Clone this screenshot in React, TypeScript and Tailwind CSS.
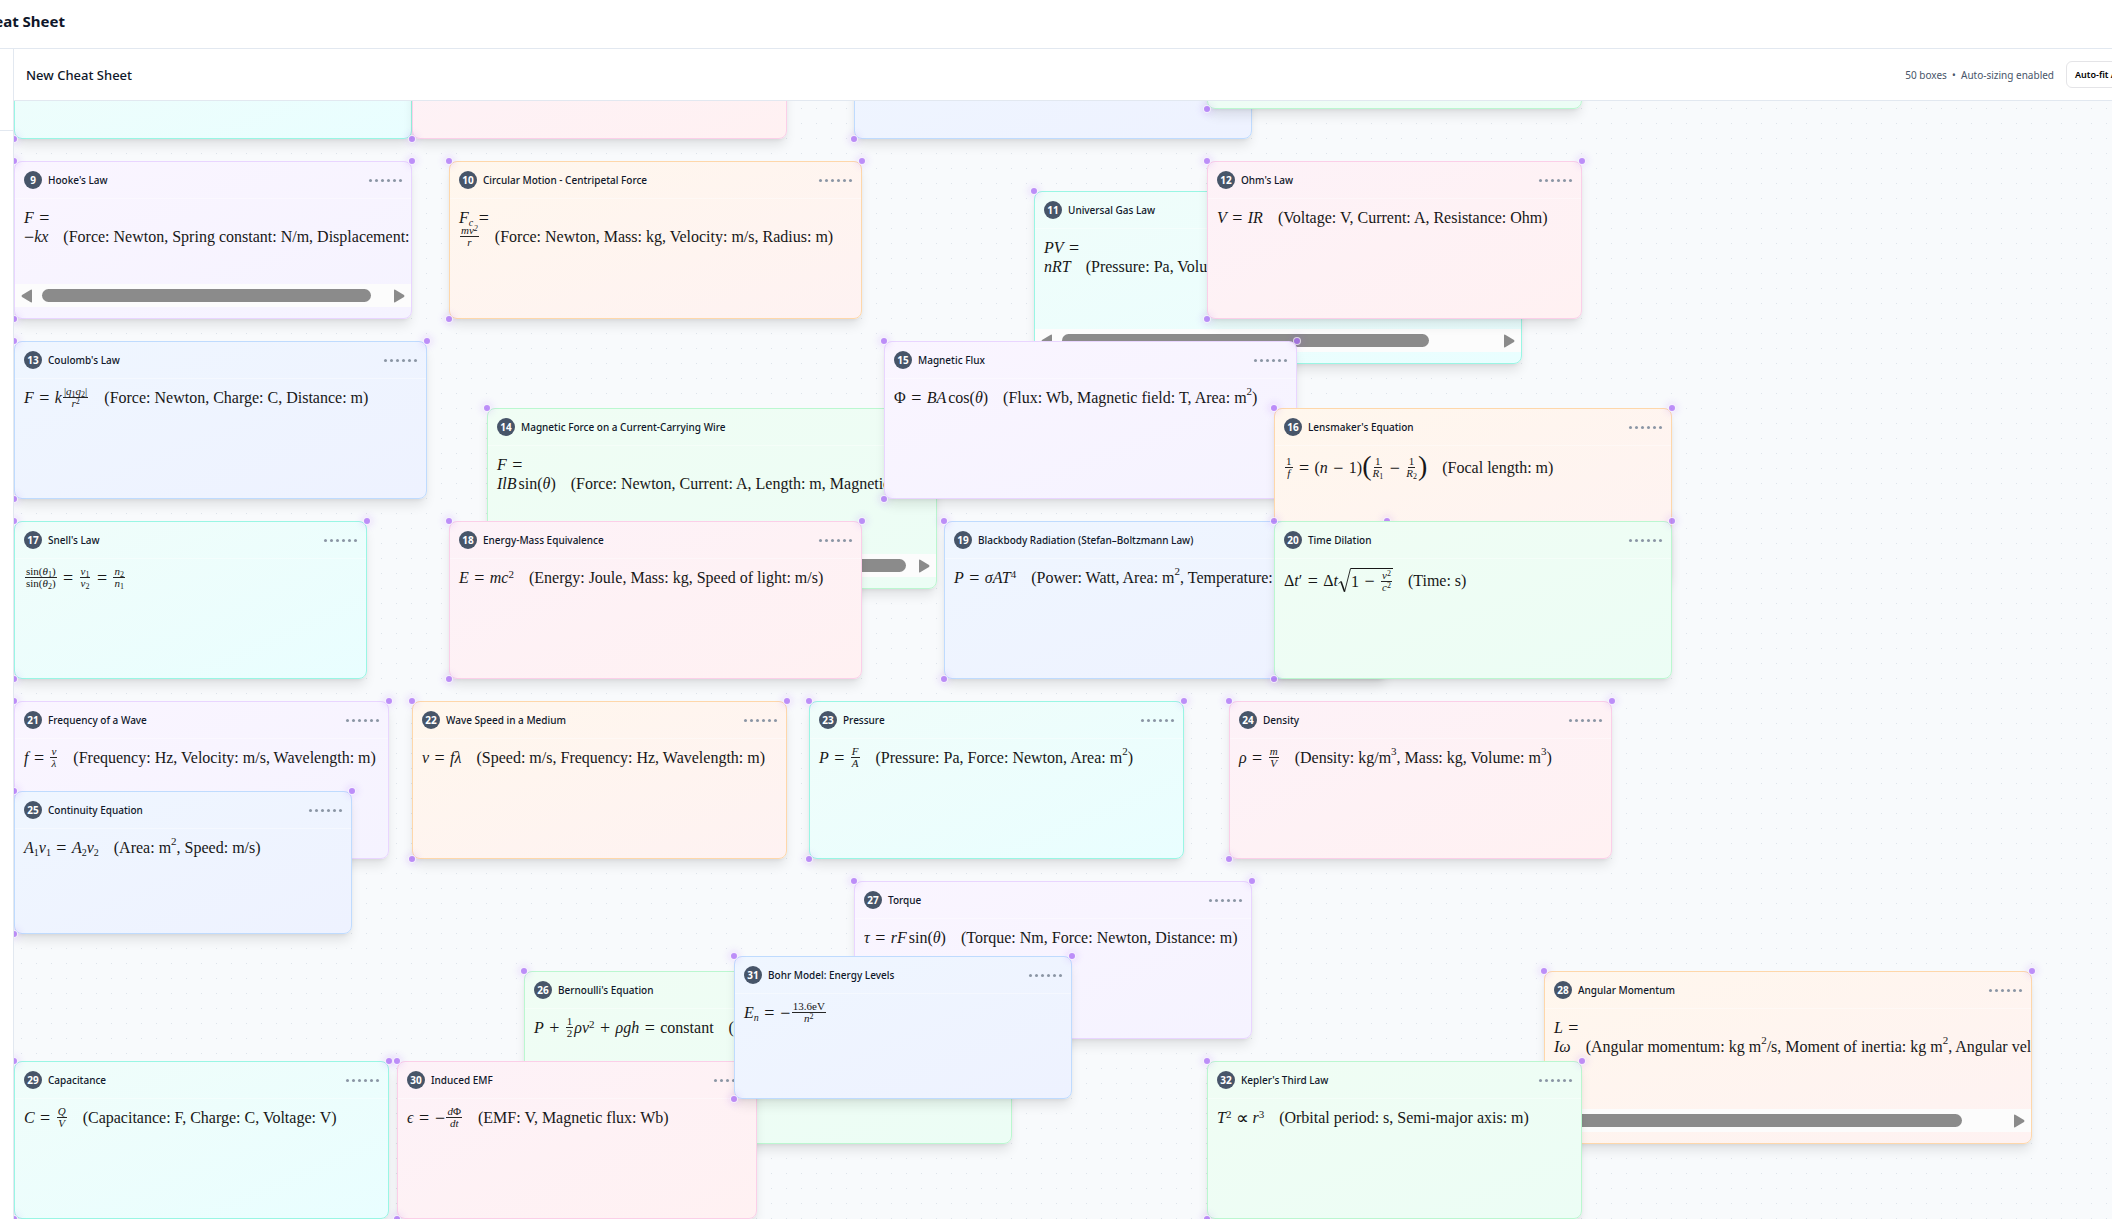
import type { ReactNode } from "react";

const themes = {
  teal: "border-[#99f6e4] from-[#f0fdfa] to-[#e9feff]",
  pink: "border-[#fbcfe8] from-[#fdf2f8] to-[#fff1f2]",
  purple: "border-[#e9d5ff] from-[#faf5ff] to-[#f5f3ff]",
  orange: "border-[#fed7aa] from-[#fff7ed] to-[#fef2f2]",
  blue: "border-[#bfdbfe] from-[#eff6ff] to-[#eef2ff]",
  green: "border-[#bbf7d0] from-[#f0fdf4] to-[#ecfdf5]",
};

type Box = {
  id: number;
  title: string;
  theme: keyof typeof themes;
  x: number;
  y: number;
  w: number;
  h: number;
  body?: ReactNode;
  thumb?: number;
};

/* ---------- formula building blocks ---------- */

const V = ({ children }: { children: ReactNode }) => <i>{children}</i>;

const Op = ({ children = "=" }: { children?: ReactNode }) => (
  <span className="mx-[5px] inline-block w-[11px] text-center text-[18px] leading-none">{children}</span>
);

const Minus = () => <span className="inline-block w-[11px] text-center text-[18px] leading-none">−</span>;

const Frac = ({ top, bottom }: { top: ReactNode; bottom: ReactNode }) => (
  <span className="mx-px inline-flex flex-col items-center text-[11px] leading-[11px] [&_sub]:text-[8px]! [&_sup]:-top-[3px] [&_sup]:text-[8px]!">
    <span className="border-b border-neutral-800 px-px">{top}</span>
    <span>{bottom}</span>
  </span>
);

const Line = ({ tall = false, children }: { tall?: boolean; children: ReactNode }) => (
  <div className={`flex items-center [&_sub]:text-[10px] [&_sup]:text-[11px] ${tall ? "h-[25px]" : "h-[19px]"}`}>
    {children}
  </div>
);

const Units = ({ children }: { children: ReactNode }) => (
  <span className="ml-[15px] [&_sup]:-top-2">({children})</span>
);

const Paren = ({ children }: { children: ReactNode }) => (
  <span className="pb-1 text-[28px] leading-[28px] first-of-type:ml-1">{children}</span>
);

const Sqrt = ({ children }: { children: ReactNode }) => (
  <span className="flex h-[25px] items-stretch">
    <svg className="h-[25px] w-[13px] text-neutral-900" viewBox="0 0 13 25" fill="none" stroke="currentColor" aria-hidden="true">
      <path d="M0.5 15.5 L3 13.5" strokeWidth="0.8" />
      <path d="M3 13.5 L6.5 23.5" strokeWidth="1.6" />
      <path d="M6.5 24 L12.5 0.5 H13" strokeWidth="0.9" />
    </svg>
    <span className="flex items-center border-t border-neutral-900">{children}</span>
  </span>
);

/* ---------- data ---------- */

const boxes: Box[] = [
  { id: 5, title: "Potential Energy", theme: "teal", x: 0, y: -120, w: 398, h: 158 },
  { id: 6, title: "Work Done", theme: "pink", x: 398, y: -120, w: 375, h: 158 },
  { id: 7, title: "Power", theme: "blue", x: 840, y: -120, w: 398, h: 158 },
  { id: 8, title: "Momentum", theme: "green", x: 1193, y: -150, w: 375, h: 158 },
  {
    id: 9, title: "Hooke's Law", theme: "purple", x: 0, y: 60, w: 398, h: 158, thumb: 329,
    body: (
      <>
        <Line><V>F</V><Op /></Line>
        <Line><Minus /><V>kx</V><Units>Force: Newton, Spring constant: N/m, Displacement: m</Units></Line>
      </>
    ),
  },
  {
    id: 10, title: "Circular Motion - Centripetal Force", theme: "orange", x: 435, y: 60, w: 413, h: 158,
    body: (
      <>
        <Line><span><V>F<sub>c</sub></V></span><Op /></Line>
        <Line><Frac top={<V>mv<sup>2</sup></V>} bottom={<V>r</V>} /><Units>Force: Newton, Mass: kg, Velocity: m/s, Radius: m</Units></Line>
      </>
    ),
  },
  {
    id: 11, title: "Universal Gas Law", theme: "teal", x: 1020, y: 90, w: 488, h: 173, thumb: 367,
    body: (
      <>
        <Line><V>PV</V><Op /></Line>
        <Line><V>nRT</V><Units>Pressure: Pa, Volume: m<sup>3</sup>, Moles: mol, Temperature: K, Gas constant: J/mol K</Units></Line>
      </>
    ),
  },
  {
    id: 12, title: "Ohm's Law", theme: "pink", x: 1193, y: 60, w: 375, h: 158,
    body: <Line><V>V</V><Op /><V>IR</V><Units>Voltage: V, Current: A, Resistance: Ohm</Units></Line>,
  },
  {
    id: 13, title: "Coulomb's Law", theme: "blue", x: 0, y: 240, w: 413, h: 158,
    body: (
      <Line>
        <V>F</V><Op /><V>k</V>
        <Frac top={<>|<V>q</V><sub>1</sub><V>q</V><sub>2</sub>|</>} bottom={<><V>r</V><sup>2</sup></>} />
        <Units>Force: Newton, Charge: C, Distance: m</Units>
      </Line>
    ),
  },
  {
    id: 14, title: "Magnetic Force on a Current-Carrying Wire", theme: "green", x: 473, y: 307, w: 450, h: 181, thumb: 391,
    body: (
      <>
        <Line><V>F</V><Op /></Line>
        <Line><V>IlB</V><span className="ml-[2px]">sin(<V>θ</V>)</span><Units>Force: Newton, Current: A, Length: m, Magnetic field: T</Units></Line>
      </>
    ),
  },
  {
    id: 15, title: "Magnetic Flux", theme: "purple", x: 870, y: 240, w: 413, h: 158,
    body: <Line>Φ<Op /><V>BA</V><span className="ml-[2px]">cos(<V>θ</V>)</span><Units>Flux: Wb, Magnetic field: T, Area: m<sup>2</sup></Units></Line>,
  },
  {
    id: 16, title: "Lensmaker's Equation", theme: "orange", x: 1260, y: 307, w: 398, h: 173,
    body: (
      <Line tall>
        <Frac top="1" bottom={<V>f</V>} /><Op />(<V>n</V><Op>−</Op>1)
        <Paren>(</Paren>
        <Frac top="1" bottom={<><V>R</V><sub>1</sub></>} /><Op>−</Op><Frac top="1" bottom={<><V>R</V><sub>2</sub></>} />
        <Paren>)</Paren>
        <Units>Focal length: m</Units>
      </Line>
    ),
  },
  {
    id: 17, title: "Snell's Law", theme: "teal", x: 0, y: 420, w: 353, h: 158,
    body: (
      <Line>
        <Frac top={<>sin(<V>θ</V><sub>1</sub>)</>} bottom={<>sin(<V>θ</V><sub>2</sub>)</>} /><Op />
        <Frac top={<><V>v</V><sub>1</sub></>} bottom={<><V>v</V><sub>2</sub></>} /><Op />
        <Frac top={<><V>n</V><sub>2</sub></>} bottom={<><V>n</V><sub>1</sub></>} />
      </Line>
    ),
  },
  {
    id: 18, title: "Energy-Mass Equivalence", theme: "pink", x: 435, y: 420, w: 413, h: 158,
    body: <Line><V>E</V><Op /><span><V>mc</V><sup>2</sup></span><Units>Energy: Joule, Mass: kg, Speed of light: m/s</Units></Line>,
  },
  {
    id: 19, title: "Blackbody Radiation (Stefan–Boltzmann Law)", theme: "blue", x: 930, y: 420, w: 443, h: 158,
    body: <Line><V>P</V><Op /><span><V>σAT</V><sup>4</sup></span><Units>Power: Watt, Area: m<sup>2</sup>, Temperature: K</Units></Line>,
  },
  {
    id: 20, title: "Time Dilation", theme: "green", x: 1260, y: 420, w: 398, h: 158,
    body: (
      <Line tall>
        <span>Δ<V>t</V>′</span><Op /><span>Δ<V>t</V></span>
        <Sqrt>1<Op>−</Op><Frac top={<><V>v</V><sup>2</sup></>} bottom={<><V>c</V><sup>2</sup></>} /></Sqrt>
        <Units>Time: s</Units>
      </Line>
    ),
  },
  {
    id: 21, title: "Frequency of a Wave", theme: "purple", x: 0, y: 600, w: 375, h: 158,
    body: <Line><V>f</V><Op /><Frac top={<V>v</V>} bottom={<V>λ</V>} /><Units>Frequency: Hz, Velocity: m/s, Wavelength: m</Units></Line>,
  },
  {
    id: 22, title: "Wave Speed in a Medium", theme: "orange", x: 398, y: 600, w: 375, h: 158,
    body: <Line><V>v</V><Op /><V>fλ</V><Units>Speed: m/s, Frequency: Hz, Wavelength: m</Units></Line>,
  },
  {
    id: 23, title: "Pressure", theme: "teal", x: 795, y: 600, w: 375, h: 158,
    body: <Line><V>P</V><Op /><Frac top={<V>F</V>} bottom={<V>A</V>} /><Units>Pressure: Pa, Force: Newton, Area: m<sup>2</sup></Units></Line>,
  },
  {
    id: 24, title: "Density", theme: "pink", x: 1215, y: 600, w: 383, h: 158,
    body: <Line><V>ρ</V><Op /><Frac top={<V>m</V>} bottom={<V>V</V>} /><Units>Density: kg/m<sup>3</sup>, Mass: kg, Volume: m<sup>3</sup></Units></Line>,
  },
  {
    id: 25, title: "Continuity Equation", theme: "blue", x: 0, y: 690, w: 338, h: 143,
    body: (
      <Line>
        <span><V>A</V><sub>1</sub><V>v</V><sub>1</sub></span><Op /><span><V>A</V><sub>2</sub><V>v</V><sub>2</sub></span>
        <Units>Area: m<sup>2</sup>, Speed: m/s</Units>
      </Line>
    ),
  },
  {
    id: 26, title: "Bernoulli's Equation", theme: "green", x: 510, y: 870, w: 488, h: 173,
    body: (
      <Line>
        <V>P</V><Op>+</Op><Frac top="1" bottom="2" /><span><V>ρv</V><sup>2</sup></span><Op>+</Op><V>ρgh</V><Op />constant
        <Units>Pressure: Pa, Density: kg/m<sup>3</sup></Units>
      </Line>
    ),
  },
  {
    id: 27, title: "Torque", theme: "purple", x: 840, y: 780, w: 398, h: 158,
    body: <Line><V>τ</V><Op /><V>rF</V><span className="ml-[2px]">sin(<V>θ</V>)</span><Units>Torque: Nm, Force: Newton, Distance: m</Units></Line>,
  },
  {
    id: 28, title: "Angular Momentum", theme: "orange", x: 1530, y: 870, w: 488, h: 173, thumb: 390,
    body: (
      <>
        <Line><V>L</V><Op /></Line>
        <Line><V>Iω</V><Units>Angular momentum: kg m<sup>2</sup>/s, Moment of inertia: kg m<sup>2</sup>, Angular velocity: rad/s</Units></Line>
      </>
    ),
  },
  {
    id: 29, title: "Capacitance", theme: "teal", x: 0, y: 960, w: 375, h: 158,
    body: <Line><V>C</V><Op /><Frac top={<V>Q</V>} bottom={<V>V</V>} /><Units>Capacitance: F, Charge: C, Voltage: V</Units></Line>,
  },
  {
    id: 30, title: "Induced EMF", theme: "pink", x: 383, y: 960, w: 360, h: 158,
    body: <Line><V>ϵ</V><Op /><Minus /><Frac top={<><V>d</V>Φ</>} bottom={<V>dt</V>} /><Units>EMF: V, Magnetic flux: Wb</Units></Line>,
  },
  {
    id: 31, title: "Bohr Model: Energy Levels", theme: "blue", x: 720, y: 855, w: 338, h: 143,
    body: <Line><span><V>E<sub>n</sub></V></span><Op /><Minus /><Frac top="13.6eV" bottom={<><V>n</V><sup>2</sup></>} /></Line>,
  },
  {
    id: 32, title: "Kepler's Third Law", theme: "green", x: 1193, y: 960, w: 375, h: 158,
    body: <Line><span><V>T</V><sup>2</sup></span><Op>∝</Op><span><V>r</V><sup>3</sup></span><Units>Orbital period: s, Semi-major axis: m</Units></Line>,
  },
];

/* ---------- cards ---------- */

const handle =
  "absolute size-2 rounded-full border border-white/90 bg-[#a96bf7] opacity-75 shadow-[0_0_6px_2px_rgba(168,85,247,0.18)]";

function ScrollBar({ thumb }: { thumb: number }) {
  return (
    <div className="mb-[11px] flex h-[23px] shrink-0 items-center bg-[#fcfcfc] px-[6px] text-[#8b8b8b]">
      <svg className="h-[14px] w-[11px]" viewBox="0 0 11 14" fill="currentColor" aria-hidden="true">
        <path d="M11 1.2 V12.8 Q11 14 9.8 13.3 L1 8 Q0 7 1 6 L9.8 0.7 Q11 0 11 1.2Z" />
      </svg>
      <div className="ml-[10px] h-[13px] shrink-0 rounded-full bg-[#8b8b8b]" style={{ width: thumb }} />
      <svg className="ml-auto h-[14px] w-[11px]" viewBox="0 0 11 14" fill="currentColor" aria-hidden="true">
        <path d="M0 1.2 V12.8 Q0 14 1.2 13.3 L10 8 Q11 7 10 6 L1.2 0.7 Q0 0 0 1.2Z" />
      </svg>
    </div>
  );
}

function Card({ box }: { box: Box }) {
  return (
    <article className="absolute" style={{ left: box.x, top: box.y, width: box.w, height: box.h }}>
      <div
        className={`flex h-full flex-col overflow-hidden rounded-lg border bg-linear-to-br shadow-[0_8px_12px_-2px_rgba(0,0,0,0.1),0_2px_4px_-2px_rgba(0,0,0,0.1)] ${themes[box.theme]}`}
      >
        <header className="flex h-[37px] shrink-0 items-center gap-[6px] border-b border-white/40 px-[9px]">
          <span className="flex size-[18px] items-center justify-center rounded-full bg-[#475569] text-[10px] leading-none font-bold text-white">
            {box.id}
          </span>
          <h3 className="text-[10px] leading-4 font-medium whitespace-nowrap text-[#0f172a]">{box.title}</h3>
          <button type="button" aria-label={`Move ${box.title}`} className="ml-auto flex gap-[3px]">
            {[0, 1, 2, 3, 4, 5].map((dot) => (
              <span key={dot} className="size-[3px] rounded-full bg-[#8b96a5]" />
            ))}
          </button>
        </header>
        <div className="min-h-0 flex-1 overflow-hidden px-[9px] pt-[9px] font-[Liberation_Serif,serif] text-[16px] leading-[19px] whitespace-nowrap text-neutral-900">
          {box.body}
        </div>
        {box.thumb && <ScrollBar thumb={box.thumb} />}
      </div>
      <span className={`${handle} -top-1 -left-1`} />
      <span className={`${handle} -top-1 -right-1`} />
      <span className={`${handle} -bottom-1 -left-1`} />
    </article>
  );
}

export default function App() {
  return (
    <div className="flex h-screen flex-col overflow-hidden bg-white font-[Noto_Sans,sans-serif] text-[#0f172a]">
      <header className="flex h-[49px] shrink-0 items-center border-b border-[#e2e8f0]">
        <div className="flex w-[65px] justify-end pb-[6px]">
          <h1 className="text-[15px] leading-6 font-bold whitespace-nowrap">Cheat Sheet</h1>
        </div>
      </header>
      <div className="flex min-h-0 flex-1">
        <aside className="w-[14px] shrink-0 border-r border-[#e2e8f0]">
          <div className="h-[82px] border-b border-[#e2e8f0]" />
        </aside>
        <main className="flex min-w-0 flex-1 flex-col">
          <div className="flex h-[52px] shrink-0 items-center border-b border-[#e2e8f0] pl-3">
            <h2 className="text-[13px] leading-5 font-medium">New Cheat Sheet</h2>
            <div className="-mr-7 ml-auto flex items-center gap-3">
              <p className="text-[10px] leading-4 whitespace-nowrap text-[#475569]">50 boxes&nbsp; • &nbsp;Auto-sizing enabled</p>
              <button
                type="button"
                className="h-[27px] w-[74px] rounded-md border border-[#e4e4e7] px-2 text-left text-[9px] font-semibold whitespace-nowrap text-black"
              >
                Auto-fit All
              </button>
            </div>
          </div>
          <div className="relative flex-1 overflow-hidden bg-[#f8fafc] bg-[radial-gradient(circle_at_center,#dde3ea_0px,transparent_1px)] bg-size-[15px_15px]">
            {boxes.map((box) => (
              <Card key={box.id} box={box} />
            ))}
          </div>
        </main>
      </div>
    </div>
  );
}
